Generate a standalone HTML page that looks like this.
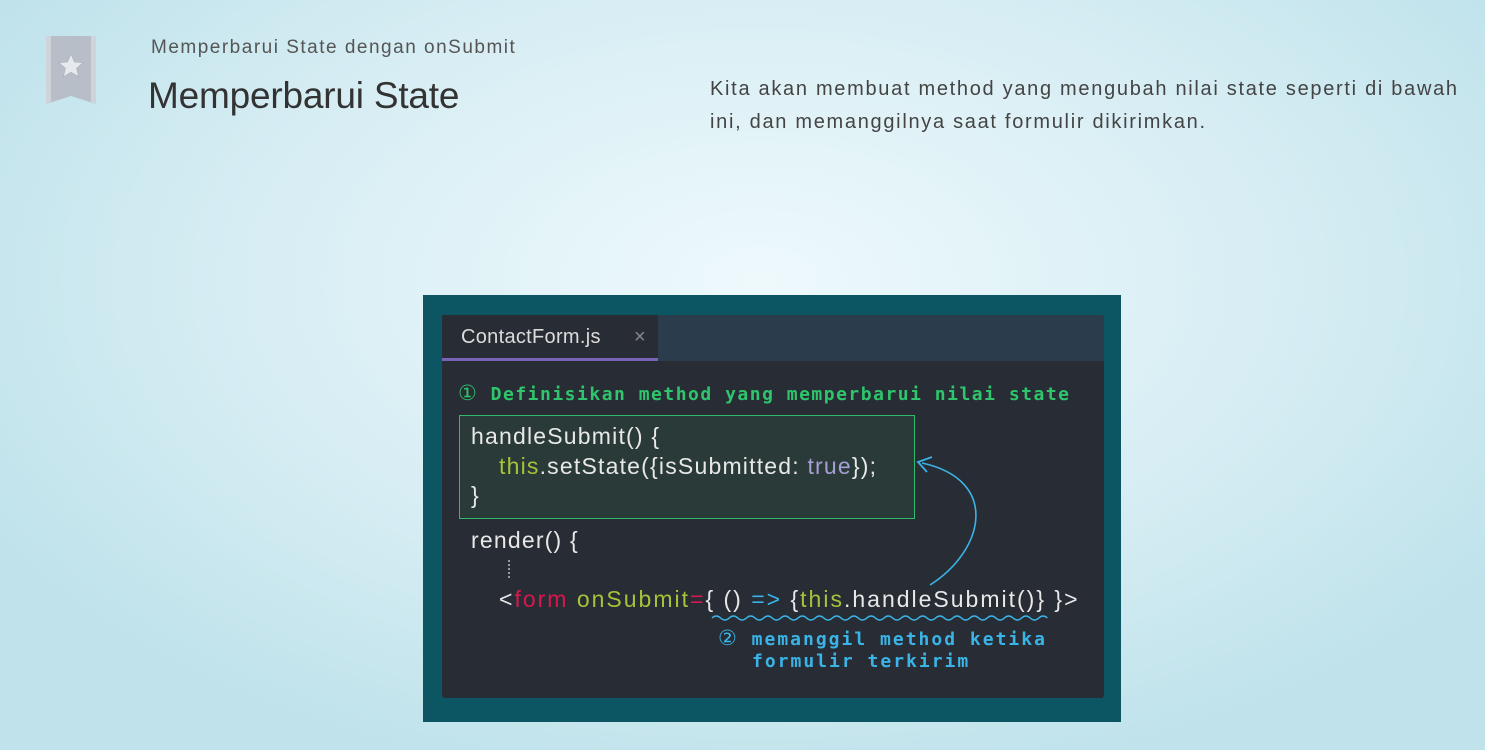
<!DOCTYPE html>
<html><head><meta charset="utf-8"><style>
*{margin:0;padding:0;box-sizing:border-box}
body{width:1485px;height:750px;overflow:hidden;position:relative;font-family:"Liberation Sans",sans-serif;
background:radial-gradient(ellipse 900px 520px at 760px 280px,#eef9fc 0%,#d8eef4 55%,#bfe2eb 100%);}
.a{position:absolute;white-space:nowrap}
.code{font-family:"Liberation Sans",sans-serif;font-size:23px;color:#e8e8e8;letter-spacing:1.2px;font-weight:300}
.hd{font-family:"DejaVu Sans Mono","Liberation Mono",monospace;font-weight:bold;font-size:18px;letter-spacing:1.5px}
</style></head><body>
<svg class="a" style="left:44px;top:35px" width="54" height="72" viewBox="0 0 54 72">
<path d="M2 1 H52 V69 L27 61 L2 69 Z" fill="#b8bec8"/>
<path d="M2 1 H7 V67 L2 69Z M47 1 H52 V69 L47 67Z" fill="#cfd4da"/>
<path d="M27 19 L30.5 27 L39 27.7 L32.6 33.3 L34.6 41.7 L27 37.2 L19.4 41.7 L21.4 33.3 L15 27.7 L23.5 27Z" fill="#e6e9ee" stroke="#a8aeb8" stroke-width="0.6"/>
</svg>
<div class="a" style="left:151px;top:37px;font-size:19px;color:#555;letter-spacing:1.5px">Memperbarui State dengan onSubmit</div>
<div class="a" style="left:148px;top:75px;font-size:37px;color:#333;letter-spacing:-0.2px">Memperbarui State</div>
<div class="a" style="left:710px;top:73px;font-size:20px;color:#444;letter-spacing:1.7px;line-height:33px">Kita akan membuat method yang mengubah nilai state seperti di bawah<br>ini, dan memanggilnya saat formulir dikirimkan.</div>

<div class="a" style="left:423px;top:295px;width:698px;height:427px;background:#0c5562"></div>
<div class="a" style="left:442px;top:315px;width:662px;height:383px;background:#282c34;border-radius:3px"></div>
<div class="a" style="left:442px;top:315px;width:662px;height:46px;background:#2b3c4d;border-radius:3px 3px 0 0"></div>
<div class="a" style="left:442px;top:315px;width:216px;height:46px;background:#282c34;border-bottom:3px solid #7a62b6"></div>
<div class="a" style="left:461px;top:326px;font-size:20px;color:#dcdcdc;letter-spacing:0.3px">ContactForm.js</div>
<div class="a" style="left:634px;top:326px;font-size:20px;color:#888">×</div>

<div class="a hd" style="left:458px;top:381px;color:#2ec56c"><span style="font-weight:normal;font-size:21px">①</span> Definisikan method yang memperbarui nilai state</div>
<div class="a" style="left:459px;top:415px;width:456px;height:104px;background:#2a3a38;border:1.5px solid #2fba6c"></div>
<div class="a code" style="left:471px;top:423px">handleSubmit() {</div>
<div class="a code" style="left:499px;top:453px"><span style="color:#a6c23a">this</span>.setState({isSubmitted: <span style="color:#a79ed6">true</span>});</div>
<div class="a code" style="left:471px;top:482px">}</div>
<div class="a code" style="left:471px;top:527px">render() {</div>
<div class="a" style="left:508px;top:560px;width:3px;height:18px;border-left:2px dotted #999"></div>
<div class="a code" style="left:499px;top:586px;letter-spacing:2px">&lt;<span style="color:#d8174f">form</span> <span style="color:#a6c23a">onSubmit</span><span style="color:#d8174f">=</span>{ () <span style="color:#3ab4e6">=&gt;</span> {<span style="color:#a6c23a">this</span>.handleSubmit()} }&gt;</div>
<svg class="a" style="left:0;top:0" width="1485" height="750">
<path d="M712 618 q4.3 -4 8.6 0 t8.6 0 t8.6 0 t8.6 0 t8.6 0 t8.6 0 t8.6 0 t8.6 0 t8.6 0 t8.6 0 t8.6 0 t8.6 0 t8.6 0 t8.6 0 t8.6 0 t8.6 0 t8.6 0 t8.6 0 t8.6 0 t8.6 0 t8.6 0 t8.6 0 t8.6 0 t8.6 0 t8.6 0 t8.6 0 t8.6 0 t8.6 0 t8.6 0 t8.6 0 t8.6 0 t8.6 0 t8.6 0 t8.6 0 t8.6 0 t8.6 0 t8.6 0 t8.6 0 t8.6 0" fill="none" stroke="#3ab4e6" stroke-width="1.5"/>
<path d="M930 585 C985 550 1000 480 922 463" fill="none" stroke="#3ab4e6" stroke-width="1.6"/>
<path d="M932 457 L918 462 L927 472" fill="none" stroke="#3ab4e6" stroke-width="1.8"/>
</svg>
<div class="a hd" style="left:718px;top:626px;color:#3ab4e6;letter-spacing:2px"><span style="font-weight:normal;font-size:21px">②</span> memanggil method ketika</div>
<div class="a hd" style="left:752px;top:651px;color:#3ab4e6;letter-spacing:2px">formulir terkirim</div>
</body></html>
